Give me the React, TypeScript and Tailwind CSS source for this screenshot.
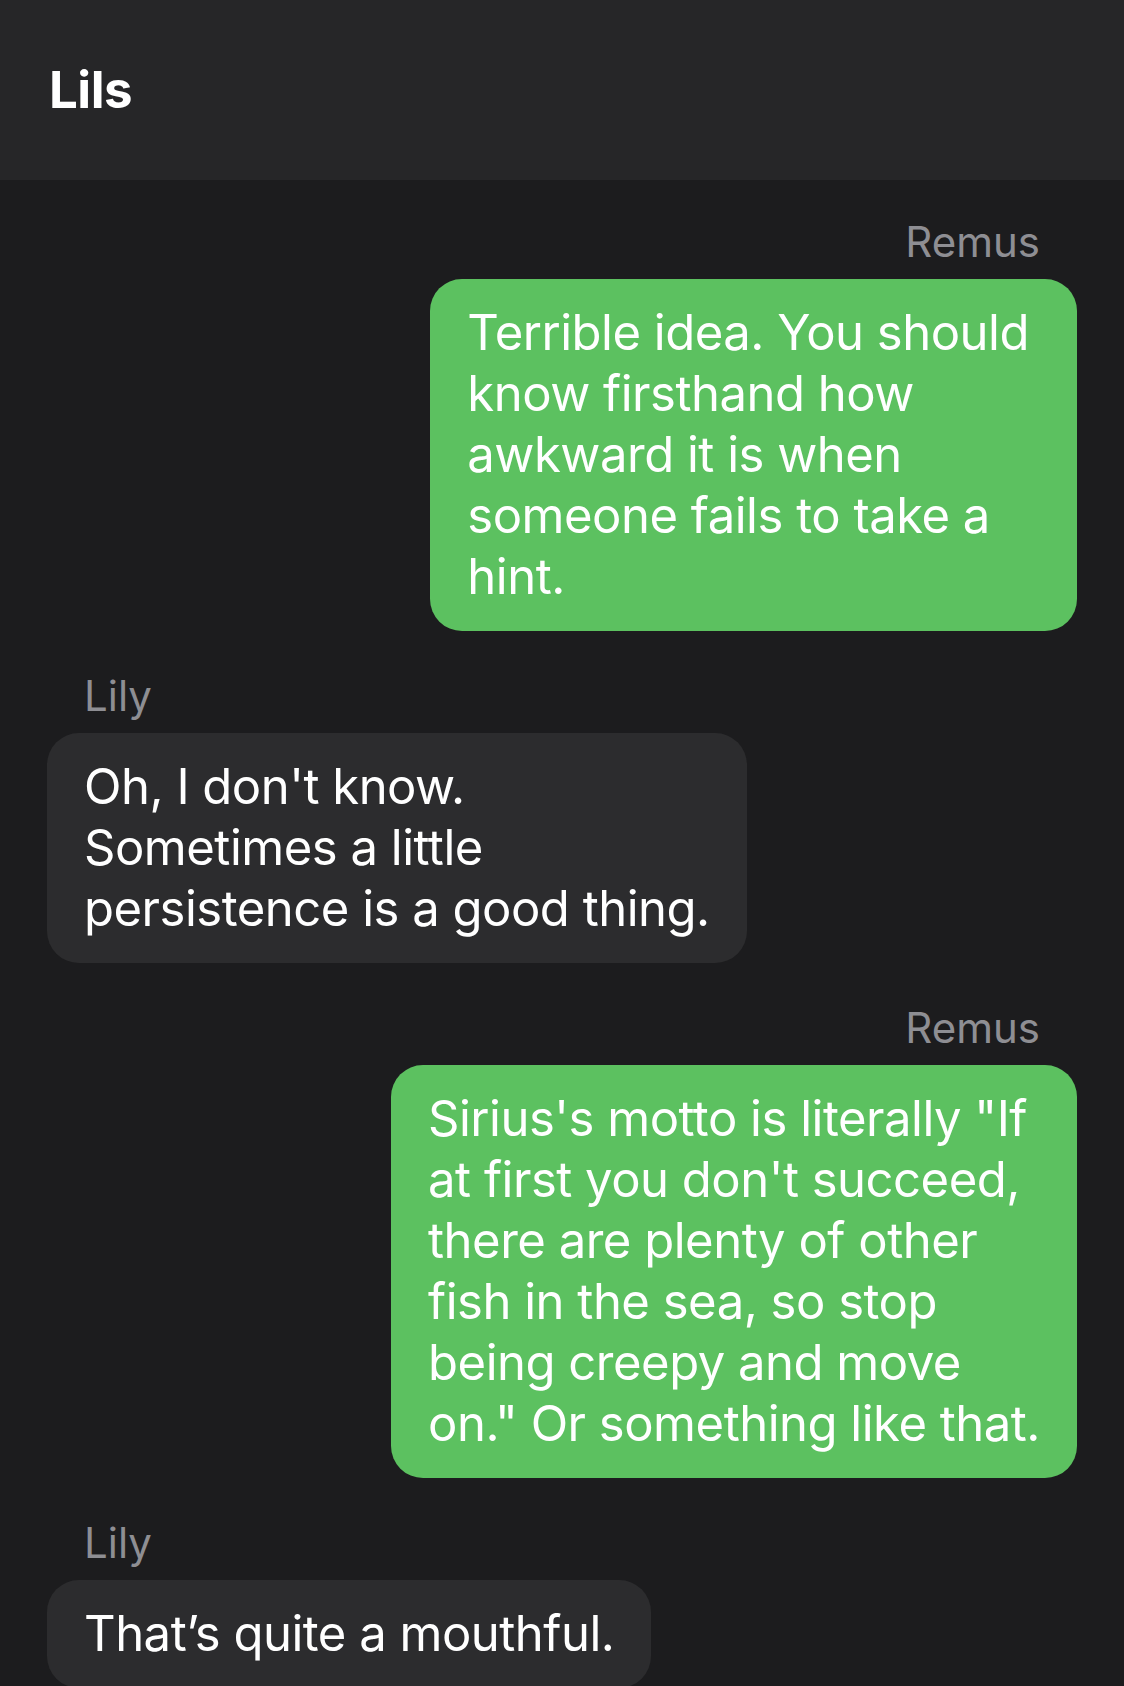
const messages = [
  {
    from: 'Remus',
    mine: true,
    extra: 'pr-[48px]',
    lines: ['Terrible idea. You should', 'know firsthand how', 'awkward it is when', 'someone fails to take a', 'hint.'],
  },
  {
    from: 'Lily',
    mine: false,
    extra: 'pr-[37px]',
    lines: ["Oh, I don't know.", 'Sometimes a little', 'persistence is a good thing.'],
  },
  {
    from: 'Remus',
    mine: true,
    extra: 'pr-[37px]',
    lines: [
      'Sirius\'s motto is literally "If',
      "at first you don't succeed,",
      'there are plenty of other',
      'fish in the sea, so stop',
      'being creepy and move',
      'on." Or something like that.',
    ],
  },
  {
    from: 'Lily',
    mine: false,
    extra: 'pr-[37px]',
    lines: ['That’s quite a mouthful.'],
  },
];

function Bubble({ from, mine, lines, extra }: { from: string; mine: boolean; lines: string[]; extra: string }) {
  return (
    <div className={`flex flex-col ${mine ? 'items-end' : 'items-start'}`}>
      <div className="px-[37px] text-[42px] leading-[50px] text-[#8e8e93]">{from}</div>
      <div
        className={`mt-[12px] rounded-[32px] pl-[37px] pt-[23px] pb-[24px] text-[49px] leading-[61px] tracking-[-0.01em] text-white ${extra} ${
          mine ? 'bg-[#5cc160]' : 'bg-[#2c2c2e]'
        }`}
      >
        {lines.map((l, i) => (
          <div key={i} className="whitespace-nowrap">
            {l}
          </div>
        ))}
      </div>
    </div>
  );
}

export default function App() {
  return (
    <div className="h-[1686px] overflow-hidden bg-[#1c1c1e] font-['Inter','Noto_Sans',sans-serif]">
      <header className="flex h-[180px] items-center bg-[#262628] px-[49px]">
        <h1 className="text-[51px] font-bold tracking-[-0.01em] text-white">Lils</h1>
      </header>
      <main className="flex flex-col gap-[40px] px-[47px] pt-[37px]">
        {messages.map((m, i) => (
          <Bubble key={i} {...m} />
        ))}
      </main>
    </div>
  );
}
